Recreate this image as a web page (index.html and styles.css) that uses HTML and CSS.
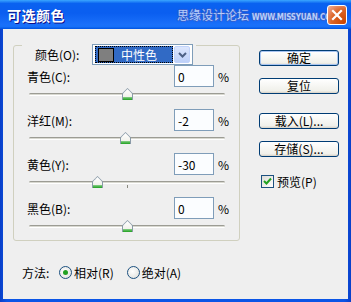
FILE: index.html
```html
<!DOCTYPE html>
<html lang="zh-CN">
<head>
    <meta charset="UTF-8">
    <title>可选颜色</title>
    <link rel="stylesheet" href="styles.css">
</head>
<body>
    <div class="window">
        <div class="titlebar">
            <span class="title">可选颜色</span>
            <span class="mark">思缘设计论坛 <b>WWW.MISSYUAN.COM</b></span>
            <button class="close">
                <svg width="12" height="12" viewBox="0 0 12 12"><path d="M2 2 L10 10 M10 2 L2 10" stroke="#fff" stroke-width="2.2" stroke-linecap="square"/></svg>
            </button>
        </div>

        <div class="body">
            <div class="main">
                <div class="group">
                    <div class="legend">
                        <span class="legend-label">颜色(O):</span>
                        <div class="select">
                            <span class="sel"><i class="swatch"></i>中性色</span>
                            <span class="arrow">
                                <svg width="9" height="6" viewBox="0 0 9 6"><path d="M1 1 L4.5 4.5 L8 1" fill="none" stroke="#4d6185" stroke-width="2"/></svg>
                            </span>
                        </div>
                    </div>

                    <div class="adj">
                        <div class="field"><label>青色(C):</label><input class="num" value="0"><span class="pct">%</span></div>
                        <div class="slider"><div class="track"></div><div class="thumb" style="left: 98px"></div></div>
                    </div>
                    <div class="adj">
                        <div class="field"><label>洋红(M):</label><input class="num" value="-2"><span class="pct">%</span></div>
                        <div class="slider"><div class="track"></div><div class="thumb" style="left: 96px"></div></div>
                    </div>
                    <div class="adj">
                        <div class="field"><label>黄色(Y):</label><input class="num" value="-30"><span class="pct">%</span></div>
                        <div class="slider"><div class="track"></div><div class="tick"></div><div class="thumb" style="left: 68px"></div></div>
                    </div>
                    <div class="adj">
                        <div class="field"><label>黑色(B):</label><input class="num" value="0"><span class="pct">%</span></div>
                        <div class="slider"><div class="track"></div><div class="thumb" style="left: 98px"></div></div>
                    </div>
                </div>

                <div class="method">
                    <span class="method-label">方法:</span>
                    <span class="radio on"></span><span class="opt">相对(R)</span>
                    <span class="radio"></span><span class="opt">绝对(A)</span>
                </div>
            </div>

            <div class="side">
                <button class="btn default">确定</button>
                <button class="btn">复位</button>
                <button class="btn gap">载入(L)...</button>
                <button class="btn">存储(S)...</button>
                <div class="check">
                    <span class="box">
                        <svg width="9" height="9" viewBox="0 0 9 9"><path d="M1 4 L3.5 6.5 L8 1.5" fill="none" stroke="#21a121" stroke-width="2"/></svg>
                    </span>
                    <span>预览(P)</span>
                </div>
            </div>
        </div>
    </div>
</body>
</html>
```

FILE: styles.css
```css
* {
    box-sizing: border-box;
}
body {
    margin: 0;
    background-color: #fff;
    font-family: "Noto Sans CJK SC", "Liberation Sans", sans-serif;
    font-size: 12px;
    color: #000;
}
.window {
    width: 351px;
    height: 302px;
    display: flex;
    flex-direction: column;
    background: linear-gradient(to right, #0a3fc8, #0b55e6 2%, #0b55e6 98%, #0a3fc8);
}
.titlebar {
    position: relative;
    height: 29px;
    display: flex;
    align-items: center;
    padding: 0 4px 0 7px;
    background: linear-gradient(to bottom, #3aa6ff 0%, #0a62f0 12%, #0a5ef0 45%, #1a70fa 85%, #1670f8 92%, #0052e0 100%);
}
.title {
    color: #fff;
    font-weight: bold;
    font-size: 14px;
    letter-spacing: 0.5px;
    text-shadow: 1px 1px #0f1089;
}
.mark {
    position: absolute;
    left: 177px;
    top: 6px;
    color: #b8cefa;
    font-size: 12px;
    white-space: nowrap;
    text-shadow: 1px 0 #3560cf, -1px 0 #3560cf, 0 1px #3560cf, 0 -1px #3560cf;
}
.mark b {
    font-family: "DejaVu Sans Condensed", "DejaVu Sans", sans-serif;
    font-size: 8px;
    letter-spacing: -0.2px;
}
.close {
    position: relative;
    z-index: 1;
    margin-left: auto;
    width: 20px;
    height: 20px;
    padding: 0;
    border: 1px solid #fff;
    border-radius: 3px;
    background: radial-gradient(circle at 90% 90%, #cc4600 0%, #dc6527 55%, #e88f6a 80%, #f2b49a 100%);
    display: flex;
    align-items: center;
    justify-content: center;
}
.body {
    flex: 1;
    margin: 0 3px 3px;
    background-color: #efefef;
    display: flex;
    padding: 16px 0 0 10px;
}
.main {
    width: 227px;
}
.group {
    height: 196px;
    border: 1px solid #d0d0bf;
    border-radius: 3px;
}
.legend {
    display: inline-flex;
    align-items: center;
    margin: -8px 0 0 8px;
    padding: 0 3px 0 13px;
    background-color: #efefef;
    height: 21px;
}
.legend-label {
    width: 57px;
}
.select {
    width: 101px;
    height: 21px;
    display: flex;
    align-items: center;
    padding: 2px;
    border: 1px solid #7f9db9;
    background-color: #fff;
}
.sel {
    flex: 1;
    height: 17px;
    display: flex;
    align-items: center;
    background-color: #316ac5;
    color: #fff;
    outline: 1px dotted #000;
    outline-offset: -1px;
    padding-left: 3px;
}
.swatch {
    width: 16px;
    height: 14px;
    background-color: #7f7f7f;
    border: 1px solid #000;
    margin-right: 7px;
}
.arrow {
    width: 16px;
    height: 17px;
    margin-left: 1px;
    border-radius: 2px;
    background: linear-gradient(to bottom, #dde7fd, #bdd0f9);
    border: 1px solid #c1d3fb;
    display: flex;
    align-items: center;
    justify-content: center;
}
.adj {
    height: 44px;
}
.adj:first-of-type {
    margin-top: 9px;
}
.field {
    height: 22px;
    display: flex;
    align-items: center;
    padding-left: 13px;
}
.field label {
    flex: 1;
}
.num {
    width: 40px;
    height: 22px;
    border: 1px solid #7f9db9;
    background-color: #fbfdff;
    font: inherit;
    padding: 0 3px;
}
.pct {
    width: 25px;
    padding-left: 4px;
}
.slider {
    position: relative;
    height: 22px;
    padding: 6px 0 0 15px;
}
.track {
    width: 196px;
    height: 3px;
    border-radius: 2px;
    border-top: 1px solid #9c9c94;
    border-bottom: 1px solid #fff;
    background-color: #d8d8d0;
}
.tick {
    position: absolute;
    left: 113px;
    top: 10px;
    width: 1px;
    height: 3px;
    background-color: #8a8a80;
}
.thumb {
    position: absolute;
    top: 1px;
    width: 11px;
    height: 12px;
    margin-left: 10px;
    background: linear-gradient(to bottom, #8a9aa8 0%, #8a9aa8 100%);
    clip-path: polygon(50% 0, 100% 45%, 100% 100%, 0 100%, 0 45%);
}
.thumb::after {
    content: "";
    position: absolute;
    left: 1px;
    top: 1px;
    width: 9px;
    height: 11px;
    background: linear-gradient(to bottom, #fff 0%, #f2f2ec 70%, #6cc46c 78%, #21a121 100%);
    clip-path: polygon(50% 0, 100% 42%, 100% 100%, 0 100%, 0 42%);
}
.method {
    height: 20px;
    margin-top: 21px;
    display: flex;
    align-items: center;
    padding-left: 9px;
}
.method-label {
    width: 37px;
}
.radio {
    width: 13px;
    height: 13px;
    border-radius: 50%;
    border: 1px solid #1c5180;
    background: radial-gradient(circle at 40% 40%, #fff, #dcdcd7);
    margin-right: 2px;
    display: flex;
    align-items: center;
    justify-content: center;
}
.radio.on::after {
    content: "";
    width: 5px;
    height: 5px;
    border-radius: 50%;
    background-color: #21a121;
}
.opt {
    margin-right: 13px;
}
.side {
    margin: 5px 0 0 19px;
    display: flex;
    flex-direction: column;
    width: 80px;
}
.btn {
    width: 80px;
    height: 16px;
    margin-bottom: 12px;
    padding: 0;
    font: inherit;
    line-height: 14px;
    border: 1px solid #003c74;
    border-radius: 3px;
    background: linear-gradient(to bottom, #fff, #f0f0ea 85%, #d6d0c5);
    color: #000;
}
.btn.default {
    box-shadow: inset 0 0 0 1px #a8c4f0;
}
.btn.gap {
    margin-top: 7px;
}
.check {
    display: flex;
    align-items: center;
    margin: 4px 0 0 2px;
}
.box {
    width: 13px;
    height: 13px;
    border: 1px solid #1c5180;
    background: linear-gradient(135deg, #dcdcd7, #fff);
    display: flex;
    align-items: center;
    justify-content: center;
    margin-right: 3px;
}
```
